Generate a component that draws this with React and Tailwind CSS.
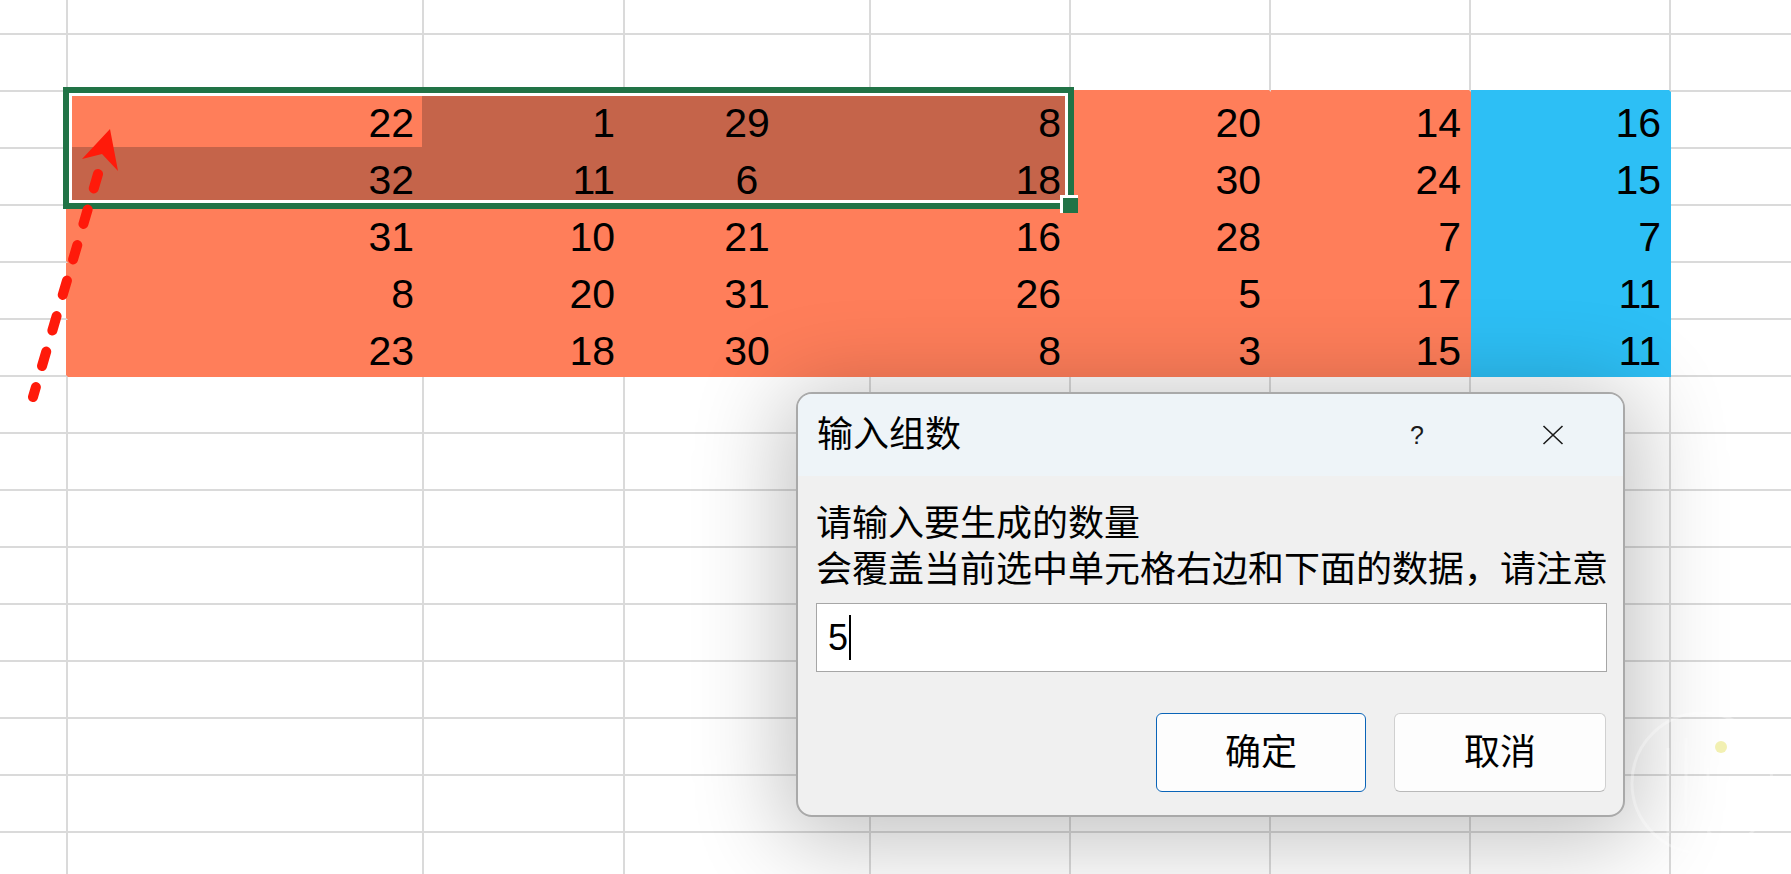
import React from 'react';

const ORANGE = { bg: 'bg-[#FF7E5A]', r: 'border-r-[#FF7E5A]', b: 'border-b-[#FF7E5A]' };
const DARK = { bg: 'bg-[#C5644A]', r: 'border-r-[#C5644A]', b: 'border-b-[#C5644A]' };
const BLUE = { bg: 'bg-[#2DBFF5]', r: 'border-r-[#2DBFF5]', b: 'border-b-[#2DBFF5]' };
const GRID = { bg: 'bg-white', r: 'border-r-[#DADADA]', b: 'border-b-[#DADADA]' };

const colWidths = ['w-[68px]', 'w-[356px]', 'w-[201px]', 'w-[246px]', 'w-[200px]', 'w-[200px]', 'w-[200px]', 'w-[200px]', 'w-[200px]'];

const data = [
  [22, 1, 29, 8, 20, 14, 16],
  [32, 11, 6, 18, 30, 24, 15],
  [31, 10, 21, 16, 28, 7, 7],
  [8, 20, 31, 26, 5, 17, 11],
  [23, 18, 30, 8, 3, 15, 11],
];

const ROWS = 16;

const fill = (r, c) => {
  if (r < 2 || r > 6 || c < 1 || c > 7) return null;
  if (c === 7) return BLUE;
  if (r <= 3 && c <= 4 && !(r === 2 && c === 1)) return DARK;
  return ORANGE;
};

const Cell = ({ r, c }) => {
  const own = fill(r, c);
  const right = fill(r, c + 1);
  const below = fill(r + 1, c);
  let bg = own ? own.bg : GRID.bg;
  let br = own ? own.r : right ? right.r : GRID.r;
  let bb = own ? own.b : below ? below.b : GRID.b;
  if (r === 2 && c === 1) {
    br = DARK.r;
    bb = DARK.b;
  }
  const value = own ? data[r - 2][c - 1] : null;
  const align = c === 3 ? 'justify-center' : 'justify-end pr-[8px]';
  return (
    <div
      className={`box-border shrink-0 border-r-2 border-b-2 flex items-end pb-[3px] ${colWidths[c]} ${r === 0 ? 'h-[35px]' : 'h-[57px]'} ${bg} ${br} ${bb} ${align}`}
    >
      {value !== null && <span className="text-[41px] leading-none text-black">{value}</span>}
    </div>
  );
};

const CloseIcon = () => (
  <svg width="22" height="20" viewBox="0 0 22 20" fill="none">
    <path d="M1.5 1 L20.5 19 M20.5 1 L1.5 19" stroke="#1b1b1b" strokeWidth="1.6" />
  </svg>
);

export default function App() {
  return (
    <div className="relative w-[1791px] h-[874px] overflow-hidden bg-white font-['Liberation_Sans','Noto_Sans_CJK_SC',sans-serif]">
      {/* sheet */}
      <div className="flex flex-col">
        {Array.from({ length: ROWS }).map((_, r) => (
          <div key={r} className="flex">
            {colWidths.map((_, c) => (
              <Cell key={c} r={r} c={c} />
            ))}
          </div>
        ))}
      </div>

      {/* selection */}
      <div className="absolute left-[63px] top-[87px] w-[1011px] h-[122px] border-[6px] border-[#217346]">
        <div className="absolute inset-0 border-[3px] border-white" />
      </div>
      <div className="absolute left-[1060px] top-[195px] w-[18px] h-[18px] box-border bg-[#217346] border-l-[3px] border-t-[3px] border-white" />

      {/* annotation arrow */}
      <svg className="absolute left-0 top-0 pointer-events-none" width="200" height="420" viewBox="0 0 200 420">
        <path d="M98 174 L33 397" stroke="#FF1A0A" strokeWidth="10" strokeLinecap="round" strokeDasharray="15 22" fill="none" />
        <polygon points="110,129 82,159 102,154 118,171" fill="#FF1A0A" />
      </svg>

      {/* dialog */}
      <div className="absolute left-[796px] top-[392px] w-[829px] h-[425px] box-border rounded-[16px] border-2 border-[#a9a9a9] bg-[#F0F0F0] overflow-hidden flex flex-col shadow-[0_12px_90px_14px_rgba(0,0,0,0.24)]">
        <div className="h-[82px] shrink-0 bg-[#EEF4F8] flex items-center pl-[19px]">
          <div className="flex-1 text-[36px] leading-none text-black">输入组数</div>
          <div className="w-[136px] flex justify-center text-[25px] leading-none text-[#1b1b1b]">?</div>
          <div className="w-[136px] mr-[2px] flex justify-center">
            <CloseIcon />
          </div>
        </div>
        <div className="flex-1 flex flex-col pl-[18px] pt-[25px]">
          <p className="text-[36px] leading-[46px] text-black">请输入要生成的数量</p>
          <p className="text-[36px] leading-[46px] text-black whitespace-nowrap">会覆盖当前选中单元格右边和下面的数据，请注意</p>
          <div className="mt-[10px] w-[791px] h-[69px] box-border border border-[#a6a6a6] bg-white flex items-center pl-[11px]">
            <span className="text-[36px] leading-none text-black">5</span>
            <span className="inline-block w-[2px] h-[45px] bg-black ml-[1px]" />
          </div>
          <div className="mt-[41px] flex justify-end gap-[28px] pr-[17px]">
            <button className="w-[210px] h-[79px] box-border rounded-[6px] border border-[#0a64b8] bg-[#FDFDFD] text-[36px] leading-none text-black">
              确定
            </button>
            <button className="w-[212px] h-[79px] box-border rounded-[6px] border border-[#d0d0d0] border-b-[#b9b9b9] bg-[#FDFDFD] text-[36px] leading-none text-black">
              取消
            </button>
          </div>
        </div>
      </div>

      {/* watermark */}
      <svg className="absolute left-[1628px] top-[708px] pointer-events-none" width="150" height="150" viewBox="0 0 150 150">
        <circle cx="74" cy="75" r="70" stroke="rgba(255,255,255,0.3)" strokeWidth="3" fill="none" />
        <path d="M40 40 L40 128 M58 30 L58 118 M80 60 L80 120 Q80 128 90 128" stroke="rgba(255,255,255,0.25)" strokeWidth="3" fill="none" />
        <circle cx="93" cy="39" r="6" fill="#F2F0B2" />
      </svg>
    </div>
  );
}
